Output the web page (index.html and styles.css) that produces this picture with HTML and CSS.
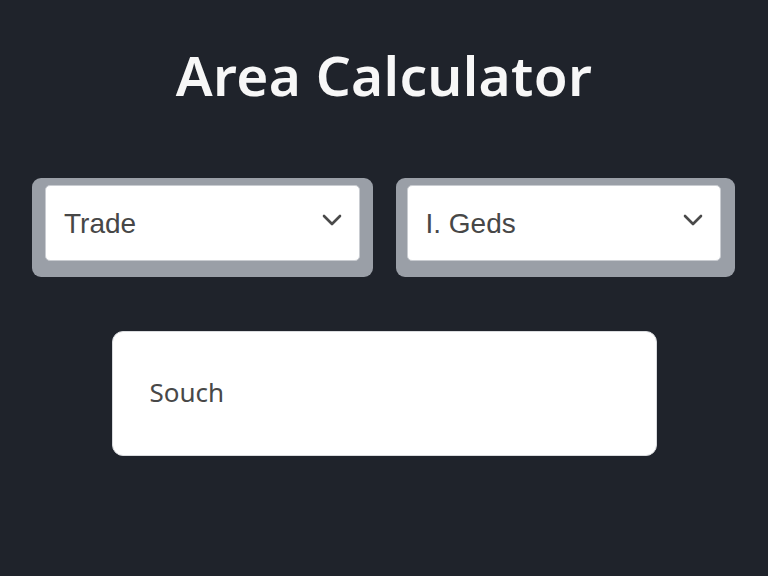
FILE: index.html
```html
<!DOCTYPE html>
<html lang="en">
<head>
  <meta charset="UTF-8" />
  <meta name="viewport" content="width=device-width, initial-scale=1.0"/>
  <title>Area Calculator</title>
  <link rel="stylesheet" href="styles.css">
</head>
<body>
  <h1 class="title">Area Calculator</h1>

  <div class="selects">
    <div class="select-wrap">
      <div class="select">
        <span>Trade</span>
        <svg class="chevron" viewBox="0 0 20 12" width="20" height="12">
          <path d="M2 2 L10 10 L18 2" fill="none" stroke="#4a4a4a" stroke-width="2.6" stroke-linecap="round" stroke-linejoin="round"/>
        </svg>
      </div>
    </div>
    <div class="select-wrap right">
      <div class="select">
        <span>I. Geds</span>
        <svg class="chevron" viewBox="0 0 20 12" width="20" height="12">
          <path d="M2 2 L10 10 L18 2" fill="none" stroke="#4a4a4a" stroke-width="2.6" stroke-linecap="round" stroke-linejoin="round"/>
        </svg>
      </div>
    </div>
  </div>

  <div class="result">
    <span>Souch</span>
  </div>
</body>
</html>
```

FILE: styles.css
```css
* {
  box-sizing: border-box;
}
html, body {
  margin: 0;
  padding: 0;
  height: 100%;
  background: #1f232b;
  overflow: hidden;
}
body {
  display: flex;
  flex-direction: column;
  align-items: center;
}
.title {
  margin: 37px 0 0;
  font-family: "Noto Sans", sans-serif;
  font-weight: 600;
  font-size: 55px;
  line-height: 76px;
  color: #f7f7f7;
  letter-spacing: 0.3px;
}
.selects {
  display: flex;
  gap: 23px;
  width: 100%;
  padding: 0 33px 0 32px;
  margin-top: 65px;
}
.select-wrap {
  flex: 1;
  background: #9a9fa7;
  border-radius: 9px;
  padding: 7px 13px 16px 13px;
}
.select-wrap.right {
  padding: 7px 14px 16px 11px;
}
.select {
  height: 76px;
  background: #fff;
  border: 1px solid #c9ccd1;
  border-radius: 5px;
  display: flex;
  align-items: center;
  justify-content: space-between;
  padding: 0 17px 0 18px;
  font-family: "Liberation Sans", Arial, sans-serif;
  font-size: 28px;
  color: #474747;
}
.select span {
  margin-top: 2px;
}
.chevron {
  display: block;
  margin-top: -6px;
}
.result {
  width: 545px;
  height: 125px;
  margin-top: 54px;
  background: #fff;
  border: 1px solid #d9dbde;
  border-radius: 11px;
  display: flex;
  align-items: center;
  padding-left: 37px;
  font-family: "Noto Sans", sans-serif;
  font-size: 26px;
  color: #484848;
}
.result span {
  margin-top: -3px;
}
```
